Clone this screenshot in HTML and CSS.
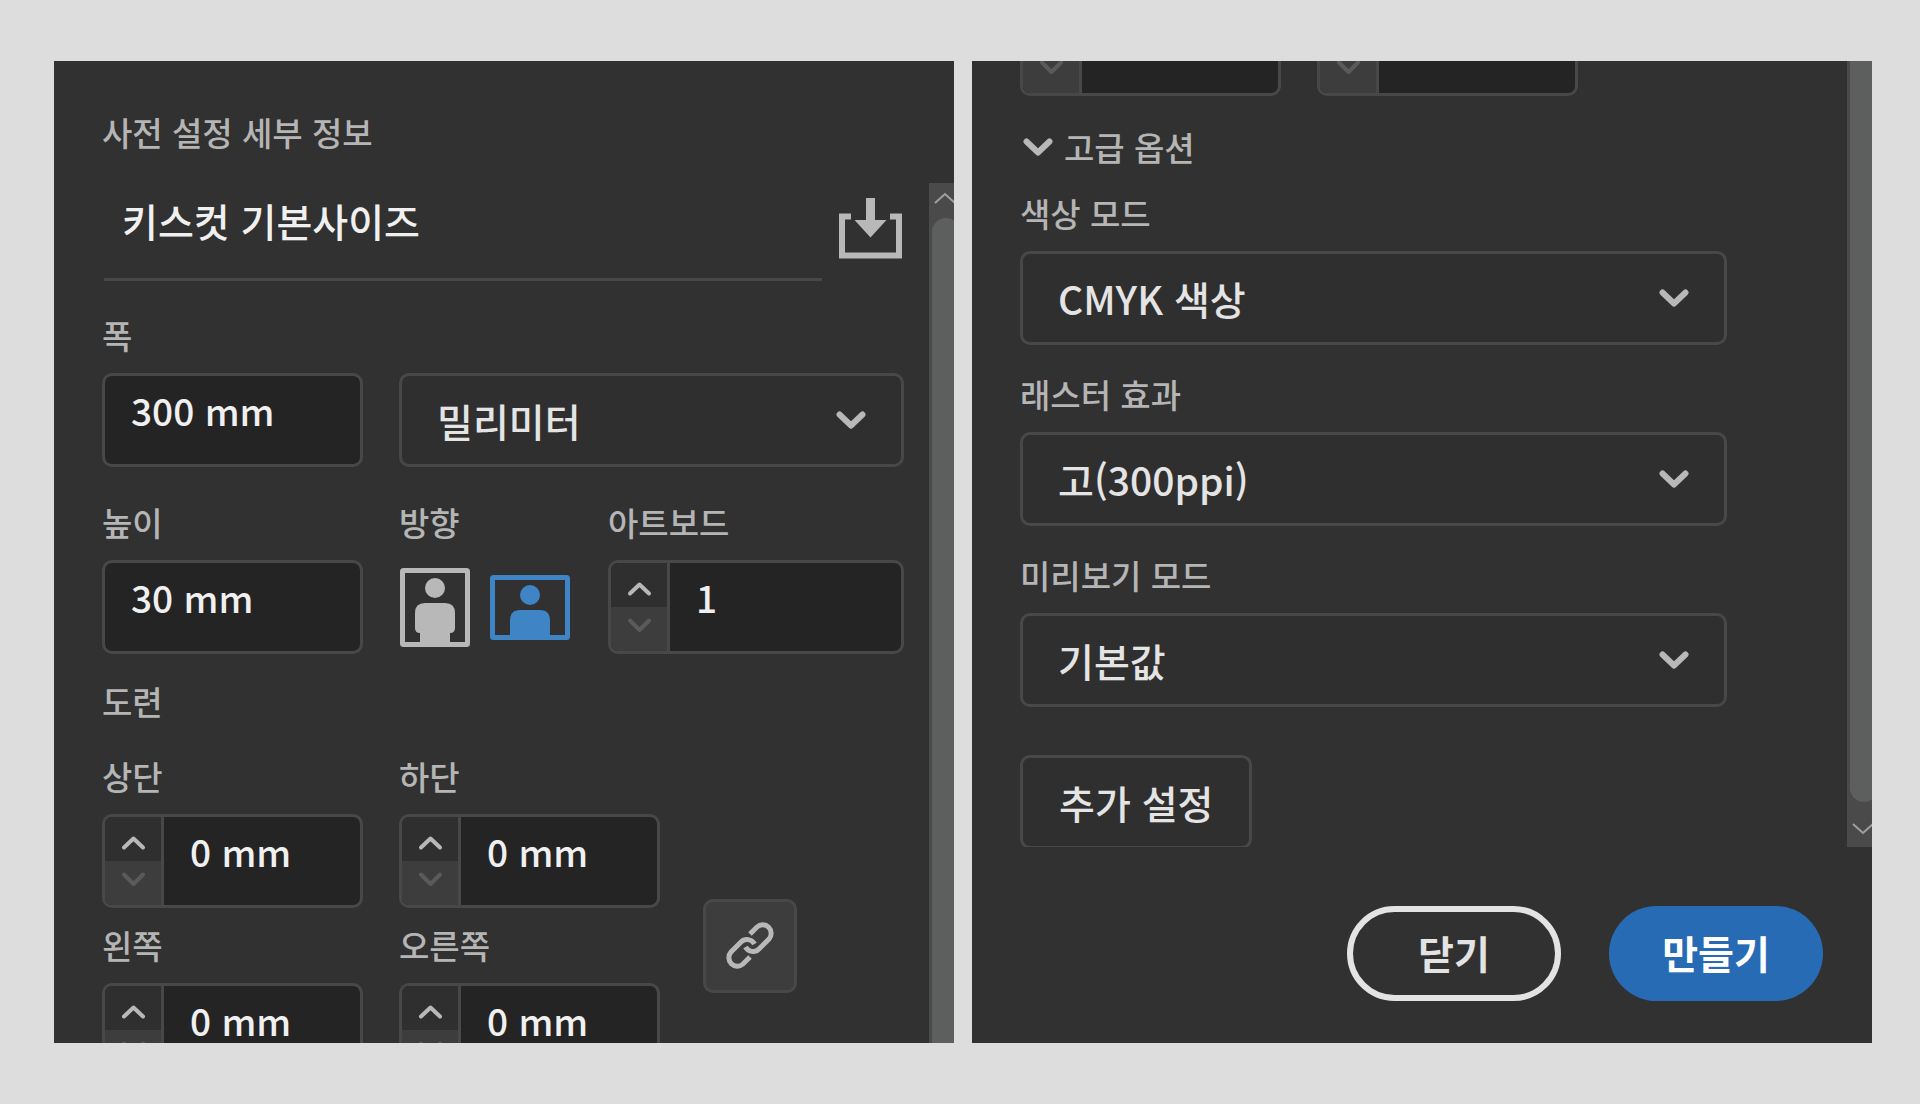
FILE: index.html
```html
<!DOCTYPE html>
<html lang="ko">
<head>
<meta charset="utf-8">
<meta name="viewport" content="width=device-width, initial-scale=1">
<title>사전 설정 세부 정보</title>
<link rel="stylesheet" href="styles.css">
</head>
<body>
<svg class="sprite" aria-hidden="true">
  <symbol id="step-up" viewBox="0 0 56 44"><path d="M19 30.500L28.500 21.500L38 30.500"/></symbol>
  <symbol id="step-down" viewBox="0 0 56 44"><path d="M19 13.500L28.500 23L38 13.500"/></symbol>
  <symbol id="chevron" viewBox="0 0 30 18"><path d="M3.500 3.500L15 14.500L26.500 3.500"/></symbol>
</svg>

<main class="page">
  <section class="panel">
    <h1 class="panel-title">사전 설정 세부 정보</h1>
    <div class="panel-body">
      <form class="content">
        <div class="name-row">
          <input class="name-input" type="text" value="키스컷 기본사이즈" aria-label="사전 설정 이름">
          <button class="icon-button" type="button" aria-label="사전 설정 저장">
            <svg width="63" height="61" viewBox="0 0 63 61"><path class="line-icon" d="M12 18.500H3V57.500H60V18.500H51"/><path class="solid-icon" d="M27 0H36V22H47.500L31.500 39.500L15.500 22H27Z"/></svg>
          </button>
        </div>

        <div class="row">
          <div class="field number-field">
            <label for="width">폭</label>
            <input class="box text-box" id="width" type="text" value="300 mm">
          </div>
          <div class="select grow">
            <select class="box" aria-label="단위"><option>밀리미터</option></select>
            <svg class="chevron"><use href="#chevron"/></svg>
          </div>
        </div>

        <div class="row">
          <div class="field number-field">
            <label for="height">높이</label>
            <input class="box text-box" id="height" type="text" value="30 mm">
          </div>
          <div class="field orientation" role="group" aria-labelledby="orientation-label">
            <span id="orientation-label">방향</span>
            <div class="orientation-buttons">
              <button class="icon-button" type="button" aria-label="세로" aria-pressed="false">
                <svg width="70" height="79" viewBox="0 0 70 79"><rect class="frame" x="2.500" y="2.500" width="65" height="74" rx="1"/><circle class="solid-icon" cx="35" cy="20" r="10"/><path class="solid-icon" d="M25 35H45Q55 35 55 45V60Q55 65 50 65V76H20V65Q15 65 15 60V45Q15 35 25 35Z"/></svg>
              </button>
              <button class="icon-button selected" type="button" aria-label="가로" aria-pressed="true">
                <svg width="80" height="65" viewBox="0 0 80 65"><rect class="frame" x="2.500" y="2.500" width="75" height="60" rx="1"/><circle class="solid-icon" cx="40" cy="20" r="10"/><path class="solid-icon" d="M30 35H50Q60 35 60 46V62H20V46Q20 35 30 35Z"/></svg>
              </button>
            </div>
          </div>
          <div class="field grow">
            <label for="artboards">아트보드</label>
            <div class="box stepper">
              <div class="steps">
                <button class="step up" type="button" aria-label="아트보드 늘리기"><svg><use href="#step-up"/></svg></button>
                <button class="step down" type="button" aria-label="아트보드 줄이기"><svg><use href="#step-down"/></svg></button>
              </div>
              <input class="step-input" id="artboards" type="text" value="1">
            </div>
          </div>
        </div>

        <h2 class="group-title">도련</h2>
        <div class="bleed">
          <div class="bleed-grid">
            <div class="field">
              <label for="bleed-top">상단</label>
              <div class="box stepper">
                <div class="steps">
                  <button class="step up" type="button" aria-label="상단 늘리기"><svg><use href="#step-up"/></svg></button>
                  <button class="step down" type="button" aria-label="상단 줄이기"><svg><use href="#step-down"/></svg></button>
                </div>
                <input class="step-input" id="bleed-top" type="text" value="0 mm">
              </div>
            </div>
            <div class="field">
              <label for="bleed-bottom">하단</label>
              <div class="box stepper">
                <div class="steps">
                  <button class="step up" type="button" aria-label="하단 늘리기"><svg><use href="#step-up"/></svg></button>
                  <button class="step down" type="button" aria-label="하단 줄이기"><svg><use href="#step-down"/></svg></button>
                </div>
                <input class="step-input" id="bleed-bottom" type="text" value="0 mm">
              </div>
            </div>
            <div class="field">
              <label for="bleed-left">왼쪽</label>
              <div class="box stepper">
                <div class="steps">
                  <button class="step up" type="button" aria-label="왼쪽 늘리기"><svg><use href="#step-up"/></svg></button>
                  <button class="step down" type="button" aria-label="왼쪽 줄이기"><svg><use href="#step-down"/></svg></button>
                </div>
                <input class="step-input" id="bleed-left" type="text" value="0 mm">
              </div>
            </div>
            <div class="field">
              <label for="bleed-right">오른쪽</label>
              <div class="box stepper">
                <div class="steps">
                  <button class="step up" type="button" aria-label="오른쪽 늘리기"><svg><use href="#step-up"/></svg></button>
                  <button class="step down" type="button" aria-label="오른쪽 줄이기"><svg><use href="#step-down"/></svg></button>
                </div>
                <input class="step-input" id="bleed-right" type="text" value="0 mm">
              </div>
            </div>
          </div>
          <button class="box link-button" type="button" aria-label="모든 설정 동일하게" aria-pressed="true">
            <svg width="48" height="49" viewBox="0 0 48 49"><path d="M24 13L31 6A8.500 8.500 0 0 1 43 18L33 28A8.500 8.500 0 0 1 19.500 26"/><path d="M24 36L17 43A8.500 8.500 0 0 1 5 31L15 21A8.500 8.500 0 0 1 28.500 23"/></svg>
          </button>
        </div>
      </form>
      <div class="scrollbar" aria-hidden="true">
        <svg class="scroll-arrow" width="30" height="35" viewBox="0 0 30 35"><path d="M6 20L16 11L26 20"/></svg>
        <div class="thumb thumb-start"></div>
      </div>
    </div>
  </section>

  <section class="panel">
    <div class="panel-body">
      <form class="content content-wide">
        <div class="row scrolled-row">
          <div class="box stepper number-field">
            <div class="steps">
              <button class="step up" type="button" aria-label="늘리기"><svg><use href="#step-up"/></svg></button>
              <button class="step down" type="button" aria-label="줄이기"><svg><use href="#step-down"/></svg></button>
            </div>
            <input class="step-input" type="text" aria-label="왼쪽">
          </div>
          <div class="box stepper number-field">
            <div class="steps">
              <button class="step up" type="button" aria-label="늘리기"><svg><use href="#step-up"/></svg></button>
              <button class="step down" type="button" aria-label="줄이기"><svg><use href="#step-down"/></svg></button>
            </div>
            <input class="step-input" type="text" aria-label="오른쪽">
          </div>
        </div>

        <button class="disclosure" type="button" aria-expanded="true">
          <svg class="chevron"><use href="#chevron"/></svg>고급 옵션
        </button>

        <div class="options">
          <div class="field">
            <label for="color-mode">색상 모드</label>
            <div class="select">
              <select class="box" id="color-mode"><option>CMYK 색상</option></select>
              <svg class="chevron"><use href="#chevron"/></svg>
            </div>
          </div>
          <div class="field">
            <label for="raster">래스터 효과</label>
            <div class="select">
              <select class="box" id="raster"><option>고(300ppi)</option></select>
              <svg class="chevron"><use href="#chevron"/></svg>
            </div>
          </div>
          <div class="field">
            <label for="preview">미리보기 모드</label>
            <div class="select">
              <select class="box" id="preview"><option>기본값</option></select>
              <svg class="chevron"><use href="#chevron"/></svg>
            </div>
          </div>
        </div>

        <button class="box more-button" type="button">추가 설정</button>
      </form>
      <div class="scrollbar" aria-hidden="true">
        <div class="thumb thumb-end"></div>
        <svg class="scroll-arrow" width="30" height="45" viewBox="0 0 30 45"><path d="M6 22L16 31L26 22"/></svg>
      </div>
    </div>
    <footer class="actions">
      <button class="pill outline" type="button">닫기</button>
      <button class="pill primary" type="button">만들기</button>
    </footer>
  </section>
</main>
</body>
</html>
```
FILE: styles.css
```css
:root {
  --line: #484848;
  --label: #b5b5b5;
  --icon: #b8b8b8;
  --field: #242424;
  --raised: #2f2f2f;
  --text: #f0f0f0;
}

* { box-sizing: border-box; }

body {
  margin: 0;
  background: #dddddd;
  color: var(--label);
  font: 500 33px/36px "Noto Sans CJK KR", sans-serif;
}

button, input, select {
  margin: 0;
  padding: 0;
  border: 0;
  border-radius: 0;
  background: none;
  color: var(--text);
  font: inherit;
  font-size: 39px;
}

svg { display: block; flex: none; }
.sprite { display: none; }

.page {
  display: grid;
  grid-template-columns: 1fr 1fr;
  gap: 18px;
  height: 100vh;
  padding: 61px 48px 61px 54px;
}

.panel {
  display: flex;
  flex-direction: column;
  min-width: 0;
  overflow: hidden;
  background: #313131;
}

.panel-title {
  margin: 0;
  padding: 53px 48px 33px;
  font-size: 33px;
  font-weight: 500;
}

.panel-body {
  display: flex;
  flex: 1;
  min-height: 0;
  overflow: hidden;
}

.content {
  flex: 1;
  min-width: 0;
  padding: 0 25px 0 48px;
}

.content-wide { padding-right: 120px; }

/* Rows and fields */
.row {
  display: flex;
  align-items: flex-end;
  gap: 36px;
  margin-bottom: 37px;
}

.field {
  display: flex;
  flex-direction: column;
  gap: 20px;
}

.grow { flex: 1; min-width: 0; }
.number-field { width: 261px; }

.name-row {
  display: flex;
  align-items: flex-end;
  gap: 17px;
  margin: 0 2px 36px;
}

.name-input {
  flex: 1;
  min-width: 0;
  height: 98px;
  padding: 0 18px 22px;
  border-bottom: 3px solid var(--line);
}

.name-row .icon-button { margin-bottom: 22px; }

.box {
  height: 94px;
  border: 3px solid var(--line);
  border-radius: 10px;
}

.text-box {
  width: 100%;
  padding: 0 26px 20px;
  background: var(--field);
  font-size: 37px;
}

.select {
  display: grid;
  align-items: center;
}

.select > * { grid-area: 1 / 1; }

.select select {
  width: 100%;
  padding: 0 80px 0 35px;
  appearance: none;
  background: var(--raised);
  color: #e4e4e4;
  line-height: 60px;
}

.select .chevron {
  justify-self: end;
  margin-right: 38px;
  pointer-events: none;
}

.chevron {
  width: 30px;
  height: 18px;
  fill: none;
  stroke: var(--icon);
  stroke-width: 6;
  stroke-linecap: round;
  stroke-linejoin: round;
}

/* Steppers */
.stepper {
  display: flex;
  overflow: hidden;
  background: var(--field);
}

.steps {
  display: flex;
  flex-direction: column;
  flex: none;
  width: 59px;
  border-right: 3px solid var(--line);
}

.step { flex: 1; }

.step svg {
  width: 56px;
  height: 44px;
  fill: none;
  stroke-width: 4;
  stroke-linecap: round;
  stroke-linejoin: round;
}

.up { background: var(--raised); stroke: var(--icon); }
.down { background: #3d3d3d; stroke: #5a5a5a; }

.step-input {
  flex: 1;
  min-width: 0;
  padding: 0 26px 20px;
  font-size: 37px;
}

/* Icon buttons */
.icon-button { color: var(--icon); }
.selected { color: #3f85c6; }
.solid-icon { fill: currentColor; }

.line-icon, .frame {
  fill: none;
  stroke: currentColor;
  stroke-width: 6;
}

.frame { stroke-width: 5; }
.orientation { width: 173px; }

.orientation-buttons {
  display: flex;
  align-items: center;
  gap: 20px;
  height: 94px;
  padding-left: 1px;
}

/* Bleed */
.group-title {
  margin: -8px 0 39px;
  font-size: 33px;
  font-weight: 500;
}

.bleed {
  display: flex;
  align-items: center;
  gap: 43px;
}

.bleed-grid {
  display: grid;
  grid-template-columns: 261px 261px;
  gap: 19px 36px;
}

.link-button {
  display: grid;
  place-items: center;
  width: 94px;
  margin-top: 56px;
  background: #3d3d3d;
}

.link-button svg {
  fill: none;
  stroke: var(--icon);
  stroke-width: 5;
}

/* Scrollbar */
.scrollbar {
  display: flex;
  flex-direction: column;
  flex: none;
  width: 25px;
  padding-left: 3px;
  overflow: hidden;
  background: #4a4a4b;
}

.thumb {
  flex: 1;
  width: 28px;
  background: #5d5f5e;
}

.thumb-start { border-radius: 14px 14px 0 0; }
.thumb-end { border-radius: 0 0 14px 14px; }

.scroll-arrow {
  margin-left: -3px;
  fill: none;
  stroke: #a0a0a0;
  stroke-width: 2;
}

/* Advanced options */
.scrolled-row { margin: -59px 0 33px; }

.disclosure {
  display: flex;
  align-items: center;
  gap: 11px;
  margin: 0 0 30px 3px;
  color: var(--label);
  font-size: 33px;
}

.options {
  display: flex;
  flex-direction: column;
  gap: 31px;
  margin-bottom: 48px;
}

.more-button {
  padding: 0 36px;
  background: var(--raised);
  color: #e4e4e4;
}

.actions {
  display: flex;
  justify-content: flex-end;
  gap: 48px;
  padding: 59px 49px 42px;
}

.pill {
  width: 214px;
  height: 95px;
  padding-bottom: 4px;
  border-radius: 48px;
  font-weight: 700;
}

.outline { border: 6px solid #e3e3e3; color: #e3e3e3; }
.primary { background: #276bb5; color: #ffffff; }
```
